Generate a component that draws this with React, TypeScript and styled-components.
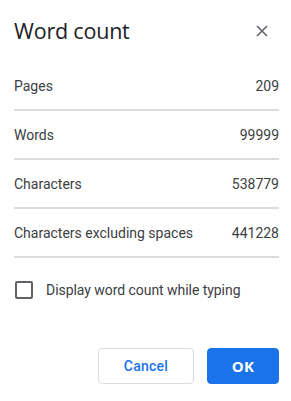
import React, { useState } from 'react';
import styled, { createGlobalStyle } from 'styled-components';

interface Stat {
  label: string;
  value: string;
}

const stats: Stat[] = [
  { label: 'Pages', value: '209' },
  { label: 'Words', value: '99999' },
  { label: 'Characters', value: '538779' },
  { label: 'Characters excluding spaces', value: '441228' },
];

const GlobalStyle = createGlobalStyle`
  html, body {
    margin: 0;
    padding: 0;
    background: #ffffff;
  }
  body {
    font-family: Roboto, "Liberation Sans", Arial, sans-serif;
    -webkit-font-smoothing: antialiased;
  }
`;

const App: React.FC = () => {
  const [live, setLive] = useState(false);

  return (
    <>
      <GlobalStyle />
      <Dialog>
        <Header>
          <Title>Word count</Title>
          <CloseButton aria-label="Close">
            <svg width="12" height="12" viewBox="0 0 12 12">
              <path d="M1 1L11 11M11 1L1 11" stroke="#5f6368" strokeWidth="1.6" fill="none" />
            </svg>
          </CloseButton>
        </Header>

        {stats.map(stat => (
          <Row key={stat.label}>
            <Label>{stat.label}</Label>
            <Value>{stat.value}</Value>
          </Row>
        ))}

        <CheckRow onClick={() => setLive(!live)}>
          <Box checked={live} />
          <CheckText>Display word count while typing</CheckText>
        </CheckRow>

        <Actions>
          <Button>Cancel</Button>
          <Button primary>OK</Button>
        </Actions>
      </Dialog>
    </>
  );
};

const Dialog = styled.div`
  width: 291px;
  height: 401px;
  box-sizing: border-box;
  padding: 0 12px 0 14px;
  background: #fff;
`;

const Header = styled.div`
  height: 62px;
  box-sizing: border-box;
  padding-top: 16px;
  display: flex;
  justify-content: space-between;
  align-items: flex-start;
`;

const Title = styled.h1`
  margin: 0;
  font-family: "Open Sans", Roboto, sans-serif;
  font-size: 21.5px;
  font-weight: 400;
  line-height: 30px;
  color: #202124;
  letter-spacing: -0.2px;
`;

const CloseButton = styled.button`
  border: 0;
  background: none;
  padding: 0;
  margin: 9px 11px 0 0;
  width: 12px;
  height: 12px;
  display: flex;
  cursor: pointer;
`;

const Row = styled.div`
  height: 47px;
  border-bottom: 2px solid #dadce0;
  display: flex;
  justify-content: space-between;
  align-items: center;
  font-size: 14px;
  color: #3c4043;
`;

const Label = styled.span``;

const Value = styled.span``;

const CheckRow = styled.label`
  margin-top: 23px;
  display: flex;
  align-items: center;
  gap: 13px;
  padding-left: 1px;
  cursor: pointer;
`;

const Box = styled.span<{ checked: boolean }>`
  width: 18px;
  height: 18px;
  box-sizing: border-box;
  border: 2px solid #5f6368;
  border-radius: 2px;
  background: ${p => (p.checked ? '#1a73e8' : 'transparent')};
`;

const CheckText = styled.span`
  font-size: 14px;
  color: #3c4043;
  letter-spacing: -0.05px;
`;

const Actions = styled.div`
  margin-top: 49px;
  display: flex;
  justify-content: flex-end;
  gap: 13px;
`;

const Button = styled.button<{ primary?: boolean }>`
  height: 36px;
  min-width: ${p => (p.primary ? '72px' : '96px')};
  box-sizing: border-box;
  border-radius: 4px;
  border: 1px solid ${p => (p.primary ? '#1a73e8' : '#dadce0')};
  background: ${p => (p.primary ? '#1a73e8' : '#fff')};
  color: ${p => (p.primary ? '#fff' : '#1a73e8')};
  font-family: ${p => (p.primary ? '"Open Sans", Roboto, sans-serif' : 'Roboto, sans-serif')};
  font-size: ${p => (p.primary ? '15px' : '14px')};
  font-weight: ${p => (p.primary ? 700 : 500)};
  letter-spacing: 0.25px;
  cursor: pointer;
`;

export default App;
